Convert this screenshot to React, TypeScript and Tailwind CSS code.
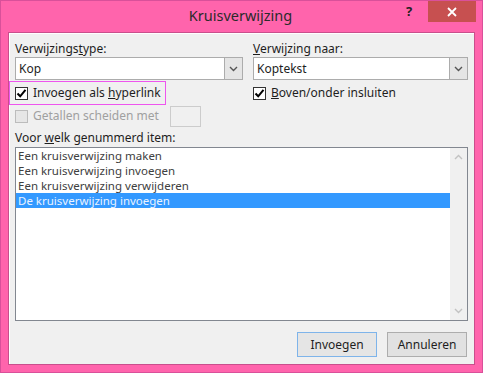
import React from "react";

const FONT = { fontFamily: '"Noto Sans", "Open Sans", sans-serif' };

function Check({ checked, disabled }: { checked?: boolean; disabled?: boolean }) {
  return (
    <span
      className={
        "flex h-[13px] w-[13px] shrink-0 items-center justify-center border " +
        (disabled ? "border-[#bcbcbc] bg-[#e6e6e6]" : "border-[#333333] bg-white")
      }
    >
      {checked ? (
        <svg width="11" height="11" viewBox="0 0 11 11">
          <path d="M1.5 5.5 L4.2 8.3 L9.5 1.8" fill="none" stroke="#000" strokeWidth="2" />
        </svg>
      ) : null}
    </span>
  );
}

function Combo({ value }: { value: string }) {
  return (
    <div className="flex h-[23px] w-full border border-[#acacac] bg-white">
      <div className="flex flex-1 items-center pl-[3px] text-[12px] text-[#1e1e1e]">{value}</div>
      <div className="flex w-[18px] items-center justify-center border-l border-[#acacac] bg-[#e5e5e5]">
        <svg width="9" height="6" viewBox="0 0 9 6">
          <path d="M1 1 L4.5 4.5 L8 1" fill="none" stroke="#555" strokeWidth="1.4" />
        </svg>
      </div>
    </div>
  );
}

const items = [
  "Een kruisverwijzing maken",
  "Een kruisverwijzing invoegen",
  "Een kruisverwijzing verwijderen",
  "De kruisverwijzing invoegen",
];

export default function App() {
  return (
    <div
      className="flex h-[373px] w-[483px] flex-col border border-[#d9509a] bg-[#ff64ac]"
      style={FONT}
    >
      <div className="flex h-[31px] shrink-0 items-start">
        <div className="flex h-[30px] flex-1 items-center justify-center pl-[84px] text-[14.5px] text-[#2b2b2b]">
          Kruisverwijzing
        </div>
        <div className="mr-[6px] flex h-[21px] w-[26px] items-center justify-center text-[13px] font-bold text-[#222]">
          ?
        </div>
        <div className="mr-[6px] flex h-[21px] w-[48px] items-center justify-center bg-[#c75050]">
          <svg width="10" height="10" viewBox="0 0 10 10">
            <path d="M1 1 L9 9 M9 1 L1 9" stroke="#fff" strokeWidth="1.8" />
          </svg>
        </div>
      </div>

      <div className="mx-[7px] mb-[7px] flex flex-1 flex-col border border-[#c94f8c] bg-[#f0f0f0] shadow-[inset_1px_1px_0_#ffffff]">
        <div className="flex gap-[10px] pl-[6px] pr-[6px] pt-[8px]">
          <div className="flex w-[228px] flex-col">
            <div className="h-[16px] text-[12px] leading-[16px] text-[#1e1e1e]">
              Verwijzings<span className="underline">t</span>ype:
            </div>
            <Combo value="Kop" />
            <div className="-ml-[6px] mt-[1px] flex h-[24px] w-[157px] items-center gap-[5px] border border-[#ee55ee] pl-[5px] text-[12px] text-[#1e1e1e]">
              <Check checked />
              <span>
                Invoegen als <span className="underline">h</span>yperlink
              </span>
            </div>
            <div className="flex h-[22px] items-center gap-[5px] text-[12px] text-[#a0a0a0]">
              <Check disabled />
              <span>Getallen scheiden met</span>
              <div className="ml-[6px] h-[21px] w-[31px] border border-[#cccccc] bg-[#f0f0f0]" />
            </div>
          </div>
          <div className="flex flex-1 flex-col">
            <div className="h-[16px] text-[12px] leading-[16px] text-[#1e1e1e]">
              <span className="underline">V</span>erwijzing naar:
            </div>
            <Combo value="Koptekst" />
            <div className="mt-[1px] flex h-[24px] items-center gap-[5px] text-[12px] text-[#1e1e1e]">
              <Check checked />
              <span>
                <span className="underline">B</span>oven/onder insluiten
              </span>
            </div>
          </div>
        </div>

        <div className="mt-[3px] px-[6px] text-[12px] leading-[16px] text-[#1e1e1e]">
          Voor <span className="underline">w</span>elk genummerd item:
        </div>
        <div className="mx-[6px] mt-[1px] flex h-[174px] border border-[#828790] bg-white">
          <div className="flex flex-1 flex-col">
            {items.map((it, i) => (
              <div
                key={it}
                className={
                  "h-[15px] overflow-hidden pl-[2px] text-[11.5px] leading-[15px] " +
                  (i === 3 ? "bg-[#3399ff] text-[#eaf3ff]" : "text-[#404040]")
                }
              >
                {it}
              </div>
            ))}
          </div>
          <div className="flex w-[17px] flex-col items-center justify-between bg-[#f0f0f0] py-[6px]">
            <svg width="9" height="6" viewBox="0 0 9 6">
              <path d="M1 5 L4.5 1.5 L8 5" fill="none" stroke="#c2c2c2" strokeWidth="1.4" />
            </svg>
            <svg width="9" height="6" viewBox="0 0 9 6">
              <path d="M1 1 L4.5 4.5 L8 1" fill="none" stroke="#c2c2c2" strokeWidth="1.4" />
            </svg>
          </div>
        </div>

        <div className="mt-[11px] flex justify-end gap-[10px] pr-[7px]">
          <button className="h-[25px] w-[80px] border border-[#7eb4ea] bg-[#e5e5e5] text-[12px] text-[#1e1e1e]">
            Invoegen
          </button>
          <button className="h-[25px] w-[80px] border border-[#adadad] bg-[#e1e1e1] text-[12px] text-[#1e1e1e]">
            Annuleren
          </button>
        </div>
      </div>
    </div>
  );
}
